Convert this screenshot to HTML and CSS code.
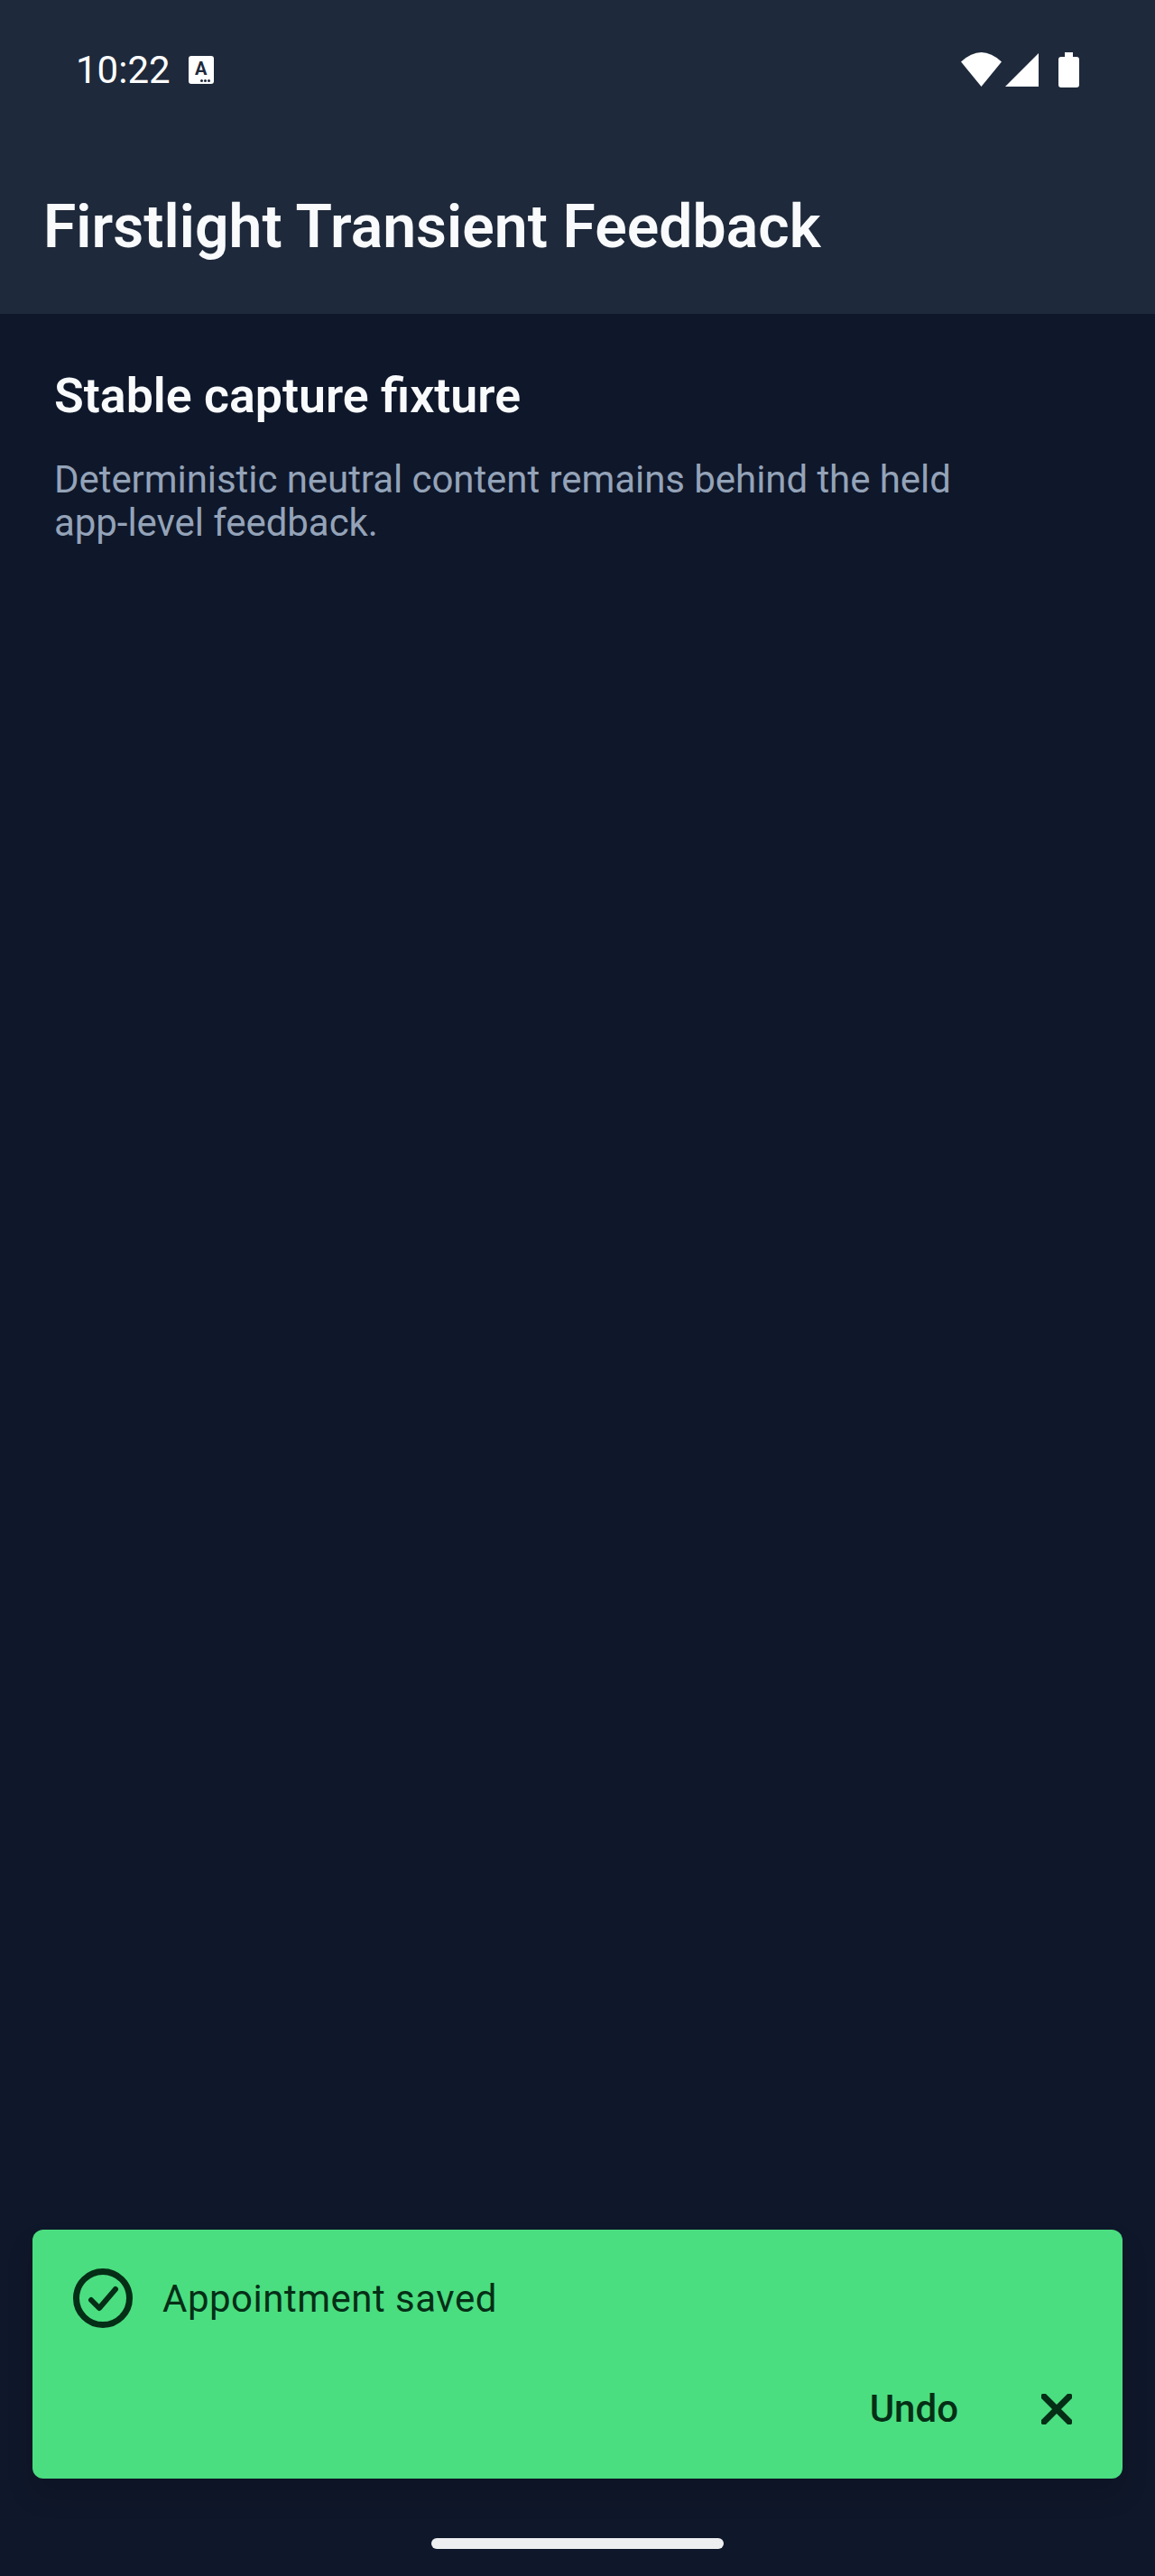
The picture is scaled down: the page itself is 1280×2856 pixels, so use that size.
FILE: index.html
```html
<!DOCTYPE html>
<html lang="en">
<head>
  <meta charset="UTF-8">
  <meta name="viewport" content="width=device-width, initial-scale=1.0">
  <title>Firstlight Transient Feedback</title>
  <link rel="stylesheet" href="styles.css">
</head>
<body>
  <div class="screen">
    <header class="app-header">
      <div class="status-bar">
        <div class="status-left">
          <span class="clock">10:22</span>
          <span class="keyboard-badge">A<i class="badge-dots"></i></span>
        </div>
        <div class="status-right">
          <svg class="icon-wifi" viewBox="0 0 45 38"><path d="M0 10.5Q22.5-10.5 45 10.5L22.5 38Z"/></svg>
          <svg class="icon-signal" viewBox="0 0 37 37"><path d="M37 0V37H0Z"/></svg>
          <svg class="icon-battery" viewBox="0 0 23 39"><path d="M7 0H16V5H20A3 3 0 0 1 23 8V36A3 3 0 0 1 20 39H3A3 3 0 0 1 0 36V8A3 3 0 0 1 3 5H7Z"/></svg>
        </div>
      </div>
      <h1>Firstlight Transient Feedback</h1>
    </header>

    <main class="content">
      <h2>Stable capture fixture</h2>
      <p>Deterministic neutral content remains behind the held app-level feedback.</p>
    </main>

    <div class="snackbar">
      <div class="snackbar-message">
        <svg class="icon-check" viewBox="0 0 66 66">
          <circle cx="33" cy="33" r="29.5"/>
          <path class="tick" d="M20 35L29 44L47 23"/>
        </svg>
        <span>Appointment saved</span>
      </div>
      <div class="snackbar-actions">
        <span class="undo">Undo</span>
        <svg class="icon-close" viewBox="0 0 34 34"><path d="M3 3L31 31M31 3L3 31"/></svg>
      </div>
    </div>

    <div class="nav-area">
      <div class="home-bar"></div>
    </div>
  </div>
</body>
</html>
```

FILE: styles.css
```css
* {
  box-sizing: border-box;
  margin: 0;
  padding: 0;
}

body {
  font-family: Roboto, "Liberation Sans", sans-serif;
  background-color: #0f172a;
}

.screen {
  display: flex;
  flex-direction: column;
  height: 2856px;
  background-color: #0f172a;
}

/* Header + status bar */
.app-header {
  height: 348px;
  background-color: #1e293b;
  color: #f8fafc;
}

.status-bar {
  display: flex;
  justify-content: space-between;
  align-items: flex-start;
  height: 204px;
  padding: 58px 84px 0;
}

.status-left {
  display: flex;
  align-items: center;
  gap: 20px;
  height: 39px;
}

.clock {
  font-size: 42px;
  line-height: 39px;
  color: #fff;
}

.keyboard-badge {
  position: relative;
  display: block;
  width: 28px;
  height: 31px;
  padding-top: 1px;
  border-radius: 3px;
  background-color: #fff;
  color: #1e293b;
  font-size: 20px;
  font-weight: 700;
  line-height: 26px;
  text-align: center;
}

.badge-dots {
  position: absolute;
  right: 4px;
  bottom: 2px;
  width: 3px;
  height: 3px;
  border-radius: 50%;
  background-color: #1e293b;
  box-shadow: -4px 0 0 #1e293b, -8px 0 0 #1e293b;
}

.status-right {
  display: flex;
  align-items: flex-start;
  gap: 4px;
  fill: #fff;
}

.icon-wifi {
  width: 45px;
  height: 38px;
}

.icon-signal {
  width: 37px;
  height: 37px;
  margin-top: 1px;
  margin-right: 18px;
}

.icon-battery {
  width: 23px;
  height: 39px;
}

.app-header h1 {
  padding-left: 48px;
  font-size: 66px;
  font-weight: 600;
  letter-spacing: 0.06px;
  line-height: 96px;
}

/* Body copy */
.content {
  flex: 1;
  padding: 55px 60px 0;
}

.content h2 {
  color: #f8fafc;
  font-size: 53.7px;
  font-weight: 600;
  line-height: 72px;
}

.content p {
  max-width: 1040px;
  margin-top: 33px;
  color: #94a3b8;
  font-size: 42px;
  letter-spacing: -0.06px;
  line-height: 48px;
}

/* Snackbar */
.snackbar {
  height: 276px;
  margin: 0 36px;
  padding: 43px 56px 0 45px;
  border-radius: 12px;
  background-color: #4ade80;
  color: #052e16;
  box-shadow: 0 18px 30px rgba(0, 0, 0, 0.14);
}

.snackbar-message {
  display: flex;
  align-items: center;
  gap: 33px;
  font-size: 42px;
  letter-spacing: 0.5px;
}

.icon-check {
  flex: none;
  width: 66px;
  height: 66px;
  fill: none;
  stroke: #052e16;
  stroke-width: 7;
  stroke-linecap: round;
  stroke-linejoin: round;
}

.tick {
  stroke-width: 6;
}

.snackbar-actions {
  display: flex;
  justify-content: flex-end;
  align-items: center;
  gap: 92px;
  margin-top: 65px;
}

.undo {
  font-size: 42px;
  font-weight: 500;
  line-height: 50px;
}

.icon-close {
  width: 34px;
  height: 34px;
  fill: none;
  stroke: #052e16;
  stroke-width: 7;
  stroke-linecap: round;
}

/* Gesture nav */
.nav-area {
  display: flex;
  justify-content: center;
  height: 108px;
  padding-top: 66px;
}

.home-bar {
  width: 324px;
  height: 12px;
  border-radius: 6px;
  background-color: #eceef0;
}
```
